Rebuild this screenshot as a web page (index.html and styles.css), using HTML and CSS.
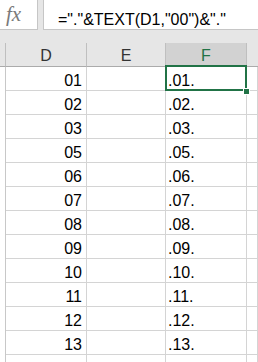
FILE: index.html
```html
<!DOCTYPE html>
<html lang="en">
<head>
    <meta charset="UTF-8">
    <title>Sheet</title>
    <link rel="stylesheet" href="styles.css">
</head>
<body>
    <div class="toolbar">
        <div class="fx">fx</div>
        <div class="formula">="."&amp;TEXT(D1,"00")&amp;"."</div>
    </div>

    <div class="sheet">
        <div class="head corner"></div>
        <div class="head">D</div>
        <div class="head">E</div>
        <div class="head active">F</div>
        <div class="head rest"></div>

        <div class="rowhead"></div><div class="cell num">01</div><div class="cell"></div><div class="cell text selected">.01.<span class="sel-box"></span><span class="handle"></span></div><div class="cell"></div>
        <div class="rowhead"></div><div class="cell num">02</div><div class="cell"></div><div class="cell text">.02.</div><div class="cell"></div>
        <div class="rowhead"></div><div class="cell num">03</div><div class="cell"></div><div class="cell text">.03.</div><div class="cell"></div>
        <div class="rowhead"></div><div class="cell num">05</div><div class="cell"></div><div class="cell text">.05.</div><div class="cell"></div>
        <div class="rowhead"></div><div class="cell num">06</div><div class="cell"></div><div class="cell text">.06.</div><div class="cell"></div>
        <div class="rowhead"></div><div class="cell num">07</div><div class="cell"></div><div class="cell text">.07.</div><div class="cell"></div>
        <div class="rowhead"></div><div class="cell num">08</div><div class="cell"></div><div class="cell text">.08.</div><div class="cell"></div>
        <div class="rowhead"></div><div class="cell num">09</div><div class="cell"></div><div class="cell text">.09.</div><div class="cell"></div>
        <div class="rowhead"></div><div class="cell num">10</div><div class="cell"></div><div class="cell text">.10.</div><div class="cell"></div>
        <div class="rowhead"></div><div class="cell num">11</div><div class="cell"></div><div class="cell text">.11.</div><div class="cell"></div>
        <div class="rowhead"></div><div class="cell num">12</div><div class="cell"></div><div class="cell text">.12.</div><div class="cell"></div>
        <div class="rowhead"></div><div class="cell num">13</div><div class="cell"></div><div class="cell text">.13.</div><div class="cell"></div>
        <div class="rowhead"></div><div class="cell"></div><div class="cell"></div><div class="cell"></div><div class="cell"></div>
    </div>
</body>
</html>
```

FILE: styles.css
```css
body {
    margin: 0;
    background: #fff;
    font-family: "Liberation Sans", Arial, sans-serif;
    font-size: 16px;
    color: #000;
    overflow: hidden;
}
.toolbar {
    display: flex;
    gap: 5px;
    background: #e6e6e6;
    padding-bottom: 13px;
}
.fx {
    box-sizing: border-box;
    width: 38px;
    height: 30px;
    background: #fff;
    border-right: 1px solid #c6c6c6;
    border-bottom: 1px solid #c6c6c6;
    padding: 2px 0 0 6px;
    font-family: "Liberation Serif", serif;
    font-style: italic;
    font-size: 21px;
    line-height: 24px;
    color: #7a7a7a;
}
.formula {
    flex: 1;
    box-sizing: border-box;
    height: 30px;
    background: #fff;
    border-left: 1px solid #c6c6c6;
    border-bottom: 1px solid #c6c6c6;
    padding: 11px 0 0 14px;
    line-height: 18px;
    white-space: nowrap;
}
.sheet {
    display: grid;
    grid-template-columns: 6px 81px 79px 81px 1fr;
    grid-auto-rows: 24px;
}
.head {
    box-sizing: border-box;
    background: #e6e6e6;
    border-right: 1px solid #bfbfbf;
    border-bottom: 1px solid #ababab;
    text-align: center;
    font-size: 16px;
    line-height: 21px;
    padding-top: 2px;
    color: #333;
}
.head.active {
    background: #d2d2d2;
    color: #217346;
}
.head.rest {
    border-right: none;
}
.rowhead {
    border-right: 1px solid #c8c8c8;
}
.cell {
    box-sizing: border-box;
    border-right: 1px solid #d4d4d4;
    border-bottom: 1px solid #d4d4d4;
    padding-top: 4px;
    line-height: 19px;
    white-space: nowrap;
}
.num {
    text-align: right;
    padding-right: 4px;
}
.text {
    padding-left: 2px;
}
.selected {
    position: relative;
}
.sel-box {
    position: absolute;
    top: -2px;
    left: -1px;
    right: -1px;
    bottom: -1px;
    border: 2px solid #217346;
}
.handle {
    position: absolute;
    right: -4px;
    bottom: -5px;
    width: 5px;
    height: 5px;
    background: #217346;
    border: 1px solid #fff;
}
```
